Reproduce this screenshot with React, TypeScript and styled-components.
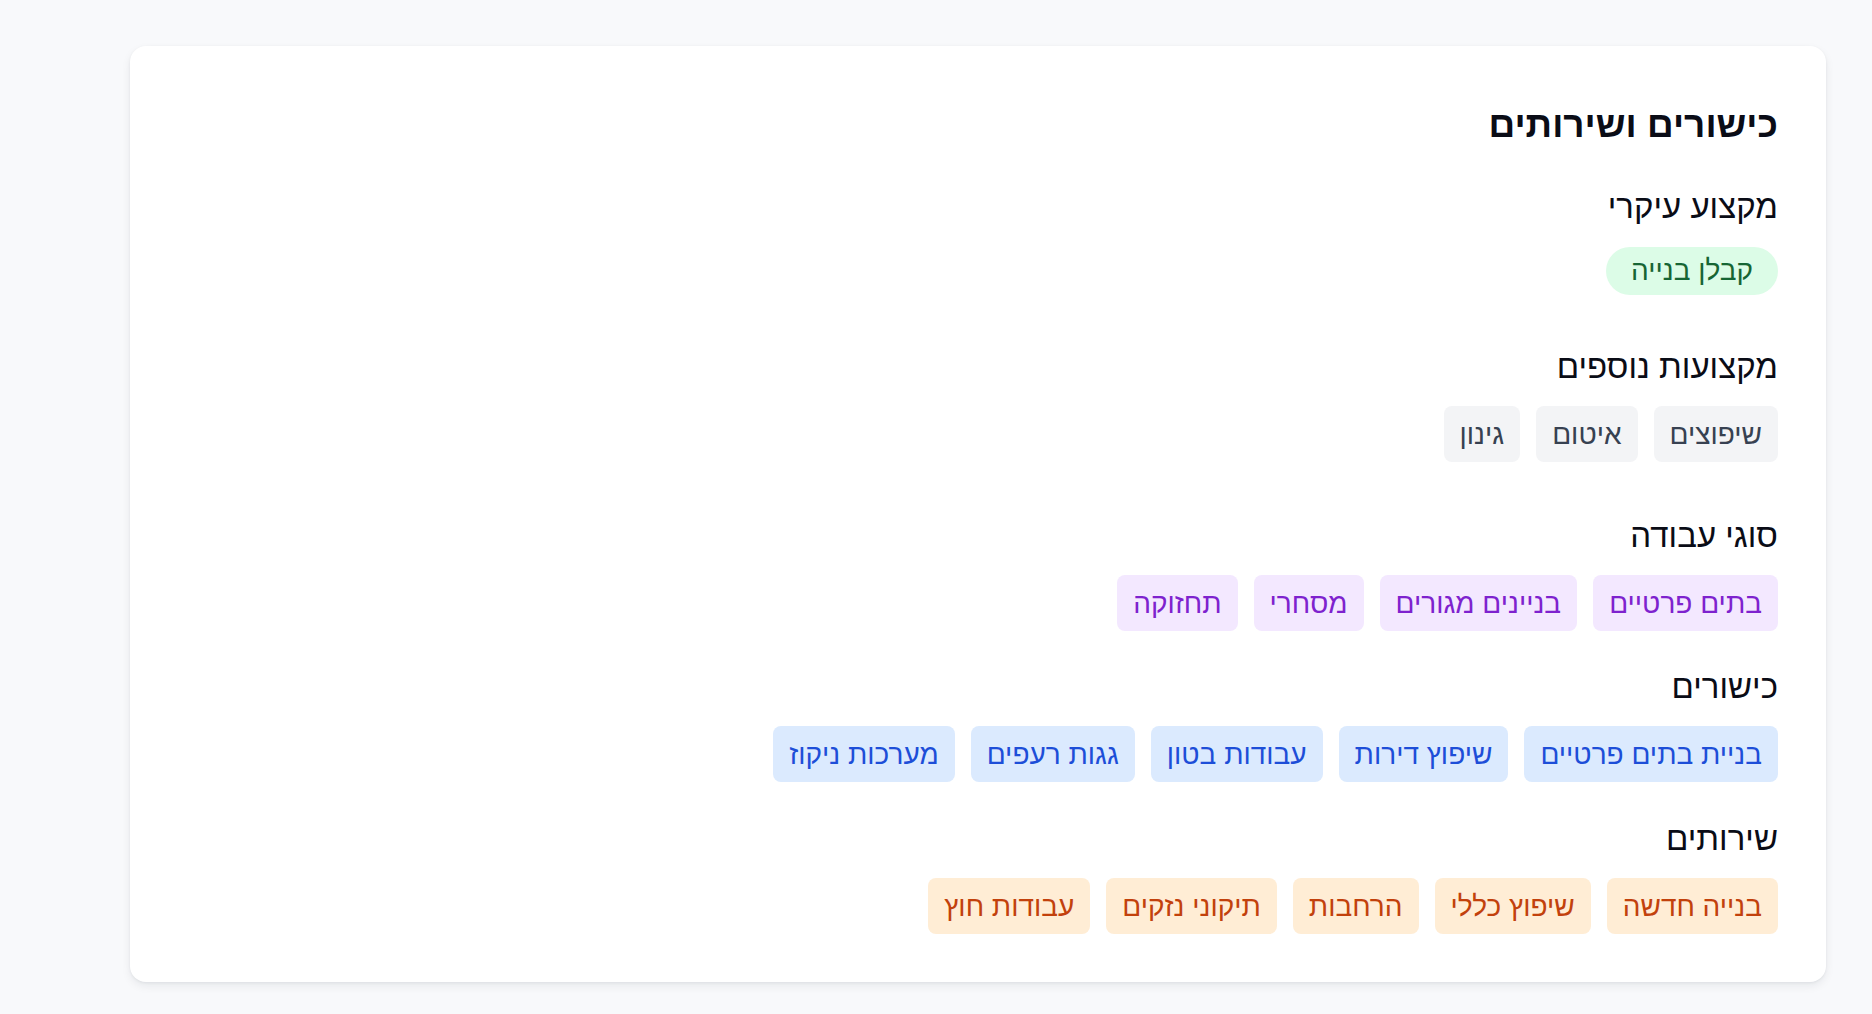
import React from "react";
import styled, { createGlobalStyle } from "styled-components";

const GlobalStyle = createGlobalStyle`
  html, body {
    margin: 0;
    padding: 0;
    background: #f8f9fb;
  }
  body {
    font-family: "Liberation Sans", Arimo, Arial, sans-serif;
    -webkit-font-smoothing: antialiased;
  }
`;

const Page = styled.div`
  min-height: 1014px;
  box-sizing: border-box;
  padding: 46px 46px 32px 130px;
  background: #f8f9fb;
`;

const Card = styled.section`
  direction: rtl;
  background: #ffffff;
  border-radius: 16px;
  box-shadow: 0 4px 10px rgba(15, 23, 42, 0.07), 0 1px 3px rgba(15, 23, 42, 0.06);
  padding: 57px 48px 48px;
`;

const Title = styled.h2`
  margin: 0 0 40px;
  font-size: 37px;
  line-height: 44px;
  font-weight: 700;
  color: #0a0c16;
`;

const Section = styled.div<{ $mb: number }>`
  margin-bottom: ${(p) => p.$mb}px;
`;

const Heading = styled.h3<{ $mb?: number }>`
  margin: 0 0 ${(p) => p.$mb ?? 19}px;
  font-size: 33px;
  line-height: 40px;
  font-weight: 400;
  color: #0a0c16;
`;

const ChipRow = styled.div`
  display: flex;
  flex-wrap: wrap;
  gap: 16px;
`;

type Variant = "gray" | "purple" | "blue" | "orange";

const palette: Record<Variant, { bg: string; fg: string }> = {
  gray: { bg: "#f3f4f6", fg: "#374151" },
  purple: { bg: "#f3e8ff", fg: "#7e22ce" },
  blue: { bg: "#dbeafe", fg: "#1d4ed8" },
  orange: { bg: "#ffedd5", fg: "#c2410c" },
};

const Chip = styled.span<{ $variant: Variant }>`
  display: inline-block;
  font-size: 28px;
  line-height: 32px;
  padding: 13px 16px 11px;
  border-radius: 8px;
  background: ${(p) => palette[p.$variant].bg};
  color: ${(p) => palette[p.$variant].fg};
`;

const Pill = styled.span`
  display: inline-block;
  font-size: 28px;
  line-height: 32px;
  font-weight: 500;
  padding: 8px 25px;
  border-radius: 9999px;
  background: #dcfce7;
  color: #166534;
`;

const groups: { title: string; variant: Variant; items: string[]; mb: number }[] = [
  { title: "מקצועות נוספים", variant: "gray", items: ["שיפוצים", "איטום", "גינון"], mb: 54 },
  {
    title: "סוגי עבודה",
    variant: "purple",
    items: ["בתים פרטיים", "בניינים מגורים", "מסחרי", "תחזוקה"],
    mb: 36,
  },
  {
    title: "כישורים",
    variant: "blue",
    items: ["בניית בתים פרטיים", "שיפוץ דירות", "עבודות בטון", "גגות רעפים", "מערכות ניקוז"],
    mb: 37,
  },
  {
    title: "שירותים",
    variant: "orange",
    items: ["בנייה חדשה", "שיפוץ כללי", "הרחבות", "תיקוני נזקים", "עבודות חוץ"],
    mb: 0,
  },
];

export default function App() {
  return (
    <>
      <GlobalStyle />
      <Page>
        <Card>
          <Title>כישורים ושירותים</Title>
          <Section $mb={52}>
            <Heading $mb={20}>מקצוע עיקרי</Heading>
            <ChipRow>
              <Pill>קבלן בנייה</Pill>
            </ChipRow>
          </Section>
          {groups.map((g) => (
            <Section key={g.title} $mb={g.mb}>
              <Heading>{g.title}</Heading>
              <ChipRow>
                {g.items.map((it) => (
                  <Chip key={it} $variant={g.variant}>
                    {it}
                  </Chip>
                ))}
              </ChipRow>
            </Section>
          ))}
        </Card>
      </Page>
    </>
  );
}
